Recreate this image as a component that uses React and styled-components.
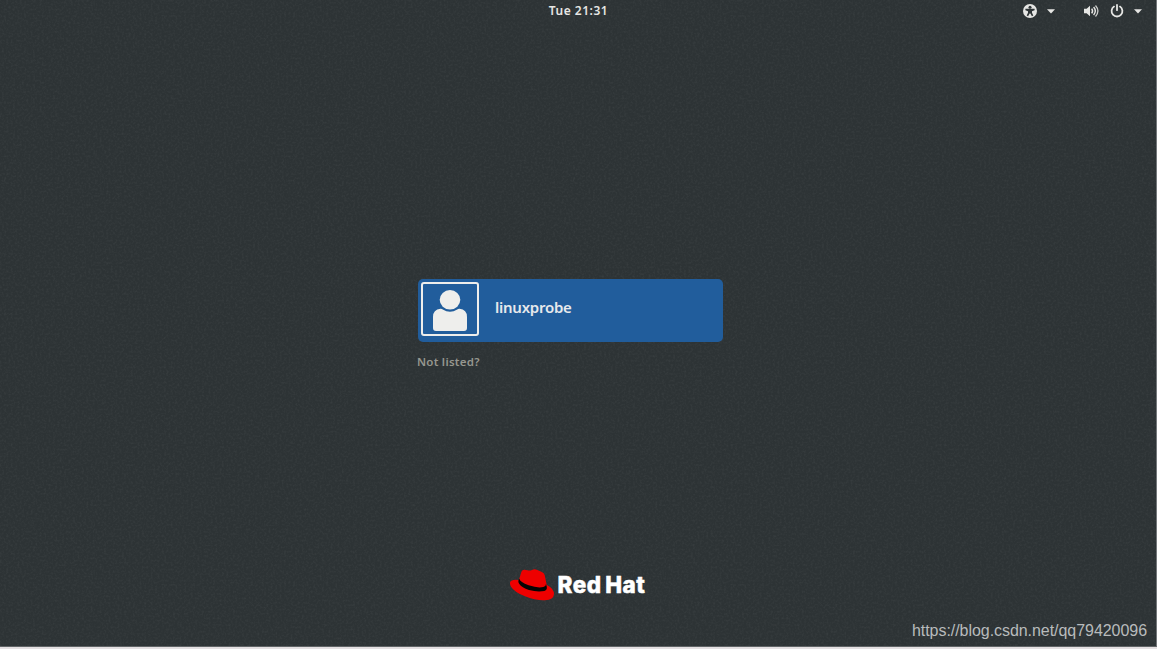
import React from "react";
import styled, { createGlobalStyle } from "styled-components";

const GlobalStyle = createGlobalStyle`
  * { box-sizing: border-box; }
  body { margin: 0; background: #e4e0e2; overflow: hidden; }
`;

const Screen = styled.main`
  position: relative;
  display: flex;
  flex-direction: column;
  width: 1157px;
  height: 647px;
  background: #2d3335;
  border-right: 1px solid #73777a;
  border-bottom: 1px solid #606466;
  color: #e6e6e4;
  font-family: "Noto Sans", "Open Sans", sans-serif;
`;

const Grain = styled.svg`
  position: absolute;
  inset: 0;
  width: 100%;
  height: 100%;
  pointer-events: none;
`;

const TopBar = styled.header`
  position: relative;
  display: grid;
  grid-template-columns: 1fr auto 1fr;
  align-items: center;
  height: 22px;
`;

const Clock = styled.time`
  grid-column: 2;
  padding-left: 1px;
  font-size: 12px;
  font-weight: 600;
  line-height: 22px;
  letter-spacing: 0.5px;
`;

const Tray = styled.div`
  display: flex;
  justify-content: flex-end;
  align-items: center;
  gap: 29px;
  padding-right: 14px;
`;

const TrayGroup = styled.div`
  display: flex;
  align-items: center;
  gap: ${(p) => p.$gap};
`;

const Icon = styled.svg`
  display: block;
  flex: none;
`;

const Login = styled.section`
  position: relative;
  display: flex;
  flex-direction: column;
  align-items: flex-start;
  width: 305px;
  margin: 257px 0 0 418px;
`;

const UserCard = styled.button`
  display: flex;
  align-items: flex-start;
  gap: 16px;
  width: 305px;
  height: 63px;
  padding: 3px;
  border: 0;
  border-radius: 5px;
  background: #215d9c;
  color: #e6e9ec;
  font-family: inherit;
  text-align: left;
`;

const Avatar = styled.span`
  display: block;
  width: 58px;
  height: 54px;
  border: 2px solid #eeeeec;
  border-radius: 3px;
`;

const UserName = styled.span`
  padding-top: 15px;
  font-size: 15px;
  font-weight: 600;
  line-height: 20px;
  letter-spacing: -0.25px;
`;

const NotListed = styled.button`
  margin: 12px 0 0 -1px;
  padding: 0;
  border: 0;
  background: none;
  color: #96978f;
  font-family: inherit;
  font-size: 11.5px;
  font-weight: 600;
  line-height: 16px;
  letter-spacing: 0.25px;
`;

const Brand = styled.div`
  position: relative;
  display: flex;
  align-items: center;
  gap: 2.5px;
  height: 34px;
  margin: auto 0 0 509px;
`;

const BrandName = styled.span`
  color: #fff;
  font-family: Inter, sans-serif;
  font-size: 22.5px;
  font-weight: 800;
  line-height: 32px;
  letter-spacing: 0.55px;
  word-spacing: -2px;
  -webkit-text-stroke: 0.5px #fff;
`;

const Watermark = styled.footer`
  position: relative;
  margin: 19px 9px 6px 0;
  text-align: right;
  color: #b8bbbc;
  font-family: "Liberation Sans", Arial, sans-serif;
  font-size: 16px;
  line-height: 19px;
  letter-spacing: -0.05px;
`;

const Noise = () => (
  <Grain aria-hidden="true">
    <filter id="grain" x="0" y="0" width="100%" height="100%">
      <feTurbulence type="fractalNoise" baseFrequency="0.45" numOctaves="2" seed="4" />
      <feColorMatrix type="matrix" values="0 0 0 0 1  0 0 0 0 1  0 0 0 0 1  0.1 0 0 0 -0.043" />
    </filter>
    <rect width="100%" height="100%" filter="url(#grain)" />
  </Grain>
);

const Caret = () => (
  <Icon width="8" height="5" viewBox="0 0 8 5">
    <path d="M0 .2h8L4 4.5z" fill="#e6e6e4" />
  </Icon>
);

const AccessIcon = () => (
  <Icon width="14" height="14" viewBox="0 0 14 14">
    <circle cx="7" cy="7" r="7" fill="#e6e6e4" />
    <circle cx="7" cy="3.2" r="1.5" fill="#2e3436" />
    <path d="M2.4 4.8h9.2v1.4L9 7.2v1.6l1.3 2.8-1.4.7L7.4 9.6h-.8l-1.5 2.7-1.4-.7L5 8.8V7.2l-2.6-1z" fill="#2e3436" />
  </Icon>
);

const VolumeIcon = () => (
  <Icon width="15" height="14" viewBox="0 0 15 14" fill="none" stroke="#e6e6e4">
    <path d="M0 4.8h2.6L6 1.7v10.6L2.6 9.2H0z" fill="#e6e6e4" stroke="none" />
    <path d="M7.7 4.6q1.7 2.4 0 4.8" strokeWidth="1.5" />
    <path d="M9.6 3q3.4 4 0 8" strokeWidth="1.4" />
    <path d="M11.5 1.5q4.8 5.5 0 11" strokeWidth="1.3" opacity=".85" />
  </Icon>
);

const PowerIcon = () => (
  <Icon width="14" height="14" viewBox="0 0 14 14" fill="none" stroke="#e6e6e4" strokeLinecap="round">
    <path d="M4 2.6a5.4 5.4 0 1 0 6 0" strokeWidth="1.8" />
    <path d="M7 1v5.2" strokeWidth="1.8" />
  </Icon>
);

const PersonIcon = () => (
  <Icon width="54" height="50" viewBox="0 0 54 50" fill="#eeeeec">
    <ellipse cx="27" cy="15.8" rx="10.3" ry="9.7" />
    <path d="M10 33q0-7.5 7.5-8.2 1.3-.1 2.3.7 7.2 4.6 14.4 0 1-.8 2.3-.7Q44 25.5 44 33v11q0 3-3 3H13q-3 0-3-3z" />
  </Icon>
);

const Hat = () => (
  <Icon width="46" height="34" viewBox="27 25 138 102">
    <path
      d="M57 60 64 37Q67 29 74 30L82 32Q90 34 96 31Q104 27 112 31L124 36Q132 38 134 46L140 75Q162 87 162 103Q161 121 135 122Q106 123 75 110Q43 97 33 81Q26 68 34 63Q42 59 57 61z"
      fill="#e00"
    />
    <path d="M58 57Q52 64 58 73Q65 84 87 91Q112 98 133 94Q143 91 140 80L138 73Q138 80 130 82Q113 86 86 77Q60 67 58 57z" fill="#050505" />
  </Icon>
);

export default function App() {
  return (
    <>
      <GlobalStyle />
      <Screen>
        <Noise />
        <TopBar>
          <Clock>Tue 21:31</Clock>
          <Tray>
            <TrayGroup $gap="10px">
              <AccessIcon />
              <Caret />
            </TrayGroup>
            <TrayGroup $gap="10.5px">
              <VolumeIcon />
              <PowerIcon />
              <Caret />
            </TrayGroup>
          </Tray>
        </TopBar>
        <Login>
          <UserCard>
            <Avatar>
              <PersonIcon />
            </Avatar>
            <UserName>linuxprobe</UserName>
          </UserCard>
          <NotListed>Not listed?</NotListed>
        </Login>
        <Brand>
          <Hat />
          <BrandName>Red Hat</BrandName>
        </Brand>
        <Watermark>https://blog.csdn.net/qq79420096</Watermark>
      </Screen>
    </>
  );
}
